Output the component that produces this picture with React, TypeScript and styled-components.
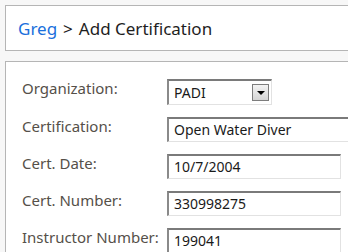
import React from "react";
import styled, { createGlobalStyle } from "styled-components";

const GlobalStyle = createGlobalStyle`
html, body {
	margin: 0;
	padding: 0;
	background: #f7f7f7;
	overflow: hidden;
}
body {
	font-family: "Noto Sans", "Open Sans", sans-serif;
}
`;

const Page = styled.div`
width: 360px;
padding: 5px 0 0 5px;
display: flex;
flex-direction: column;
gap: 10px;
`;

const Panel = styled.div`
background: #fff;
border: 1px solid #b5b5b5;
`;

const Header = styled(Panel)`
height: 44px;
display: flex;
align-items: center;
padding-left: 12px;
font-size: 17px;
color: #1e1e1e;
`;

const Crumb = styled.a`
color: #1a6fdc;
text-decoration: none;
margin-right: 6px;
`;

const Sep = styled.span`
margin-right: 6px;
`;

const FormPanel = styled(Panel)`
height: 200px;
padding: 17px 0 0 16px;
`;

const Form = styled.div`
display: grid;
grid-template-columns: 145px auto;
row-gap: 12px;
`;

const Label = styled.label`
font-size: 15px;
color: #555049;
line-height: 18px;
white-space: nowrap;
`;

const Field = styled.input<{ $w: number }>`
box-sizing: border-box;
width: ${(p) => p.$w}px;
height: 25px;
margin: 0;
padding: 0 0 1px 5px;
border-style: solid;
border-width: 2px 1px 1px 2px;
border-color: #7a7a7a #e2e2e2 #e2e2e2 #8a8a8a;
font-family: "Noto Sans", "Open Sans", sans-serif;
font-size: 14px;
color: #1a1a1a;
background: #fff;
outline: none;
`;

const Select = styled.div`
box-sizing: border-box;
width: 105px;
height: 26px;
border-style: solid;
border-width: 2px 1px 1px 2px;
border-color: #7a7a7a #e2e2e2 #e2e2e2 #8a8a8a;
display: flex;
align-items: center;
justify-content: space-between;
padding: 0 2px 0 5px;
font-size: 14px;
color: #1a1a1a;
background: #fff;
`;

const DropButton = styled.span`
box-sizing: border-box;
width: 17px;
height: 17px;
border: 1px solid #7d7d7d;
background: linear-gradient(#f4f4f4, #d4d4d4);
display: flex;
align-items: center;
justify-content: center;
`;

const Arrow = styled.span`
width: 0;
height: 0;
border-left: 4px solid transparent;
border-right: 4px solid transparent;
border-top: 4px solid #000;
`;

export default function App() {
	return (
		<>
			<GlobalStyle />
			<Page>
				<Header>
					<Crumb href="#">Greg</Crumb>
					<Sep>&gt;</Sep>
					<span>Add Certification</span>
				</Header>
				<FormPanel>
					<Form>
						<Label>Organization:</Label>
						<Select>
							<span>PADI</span>
							<DropButton>
								<Arrow />
							</DropButton>
						</Select>
						<Label>Certification:</Label>
						<Field $w={200} defaultValue="Open Water Diver" />
						<Label>Cert. Date:</Label>
						<Field $w={174} defaultValue="10/7/2004" />
						<Label>Cert. Number:</Label>
						<Field $w={174} defaultValue="330998275" />
						<Label>Instructor Number:</Label>
						<Field $w={174} defaultValue="199041" />
					</Form>
				</FormPanel>
			</Page>
		</>
	);
}
